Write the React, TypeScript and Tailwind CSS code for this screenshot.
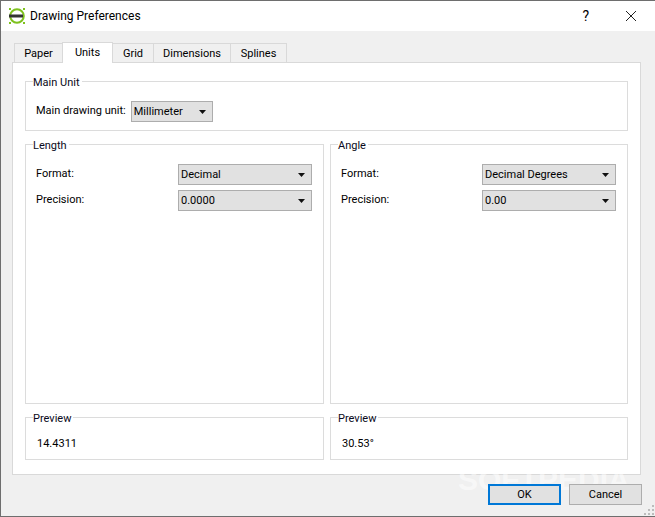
import { ReactNode } from 'react';

function Caret() {
  return (
    <svg width="7" height="4" viewBox="0 0 7 4" className="shrink-0">
      <path d="M0 0h7L3.5 4z" fill="#111" />
    </svg>
  );
}

function Combo({ value, className }: { value: string; className: string }) {
  return (
    <div className={`flex h-[21px] items-center justify-between border border-[#adadad] bg-[#e1e1e1] pl-[2px] pr-[6px] ${className}`}>
      <span className="pt-[2px]">{value}</span>
      <Caret />
    </div>
  );
}

function Group({ title, className, children }: { title: string; className: string; children: ReactNode }) {
  return (
    <fieldset className={`min-w-0 border border-[#dcdcdc] pl-[10px] pr-[11px] ${className}`}>
      <legend className="ml-[-3px] h-[16px] pr-[2px] leading-[20px] text-[#0a0a20]">{title}</legend>
      {children}
    </fieldset>
  );
}

function Row({ label, value, className }: { label: string; value: string; className?: string }) {
  return (
    <div className={`flex items-center justify-between ${className ?? ''}`}>
      <span>{label}</span>
      <Combo value={value} className="w-[134px]" />
    </div>
  );
}

function Logo() {
  return (
    <svg width="18" height="18" viewBox="0 0 18 18" className="shrink-0">
      <circle cx="9" cy="9" r="6.8" fill="none" stroke="#7ec11f" strokeWidth="2" />
      <path d="M1 1h2v2H1zM15 1h2v2h-2zM1 15h2v2H1zM15 15h2v2h-2z" fill="#7ec11f" />
      <rect x="1" y="7.5" width="14" height="3" fill="#333" />
    </svg>
  );
}

const tabs = ['Paper', 'Units', 'Grid', 'Dimensions', 'Splines'];
const tabWidths = ['w-[49px]', 'w-[51px]', 'w-[42px]', 'w-[78px]', 'w-[57px]'];

export default function App() {
  return (
    <div
      className="relative flex h-[517px] w-[655px] flex-col overflow-hidden border border-r-0 border-[#6e6e6e] bg-[#f0f0f0] text-[11px] text-black"
      style={{ fontFamily: 'Roboto, sans-serif' }}
    >
      {/* title bar */}
      <div className="flex h-[30px] shrink-0 items-center bg-white pl-[7px] text-[12px]">
        <Logo />
        <span className="ml-[4px]">Drawing Preferences</span>
        <span className="ml-auto mr-[36px] text-[14px]">?</span>
        <svg width="12" height="12" viewBox="0 0 12 12" className="mr-[18px]">
          <path d="M1 1l10 10M11 1L1 11" stroke="#222" strokeWidth="1" fill="none" />
        </svg>
      </div>

      <div className="flex flex-1 flex-col pl-[11px] pt-[10px]">
        {/* tabs */}
        <div className="z-10 flex h-[21px] items-end pl-[2px]">
          {tabs.map((t, i) => (
            <div
              key={t}
              className={
                t === 'Units'
                  ? `-mb-px -ml-px flex h-[21px] items-center justify-center border border-b-0 border-[#d9d9d9] bg-white pt-[1px] ${tabWidths[i]}`
                  : `-ml-px flex h-[19px] items-center justify-center border border-b-0 border-[#d9d9d9] bg-[#f0f0f0] pt-[2px] first:ml-0 ${tabWidths[i]}`
              }
            >
              {t}
            </div>
          ))}
        </div>

        {/* tab pane */}
        <div className="flex h-[413px] w-[629px] flex-col border border-[#d9d9d9] bg-white pl-[12px] pr-[12px] pt-[10px]">
          <Group title="Main Unit" className="h-[58px]">
            <div className="mt-[12px] flex items-center">
              <span>Main drawing unit:</span>
              <Combo value="Millimeter" className="ml-[5px] w-[82px]" />
            </div>
          </Group>

          <div className="mt-[5px] flex gap-[6px]">
            <Group title="Length" className="h-[268px] w-[299px]">
              <Row label="Format:" value="Decimal" className="mt-[12px]" />
              <Row label="Precision:" value="0.0000" className="mt-[5px]" />
            </Group>
            <Group title="Angle" className="h-[268px] w-[298px]">
              <Row label="Format:" value="Decimal Degrees" className="mt-[12px]" />
              <Row label="Precision:" value="0.00" className="mt-[5px]" />
            </Group>
          </div>

          <div className="mt-[5px] flex gap-[6px]">
            <Group title="Preview" className="h-[51px] w-[299px]">
              <div className="mt-[11px] pl-[1px]">14.4311</div>
            </Group>
            <Group title="Preview" className="h-[51px] w-[298px]">
              <div className="mt-[11px] pl-[1px]">30.53°</div>
            </Group>
          </div>
        </div>

        {/* buttons */}
        <div className="z-10 mt-[9px] flex pl-[476px]">
          <button className="h-[21px] w-[73px] border-2 border-[#0078d7] bg-[#e1e1e1] leading-none">OK</button>
          <button className="ml-[8px] h-[21px] w-[73px] border border-[#adadad] bg-[#e1e1e1] leading-none">Cancel</button>
        </div>
      </div>

      {/* watermark */}
      <div
        className="pointer-events-none absolute left-[457px] top-[464px] text-[30px] font-bold leading-none text-white/50"
        style={{ fontFamily: '"Liberation Sans", sans-serif' }}
      >
        SOFTPEDIA
      </div>

      {/* size grip */}
      <svg width="12" height="12" viewBox="0 0 12 12" className="absolute bottom-0 right-0">
        <path d="M9 1h2v2H9zM5 5h2v2H5zM9 5h2v2H9zM1 9h2v2H1zM5 9h2v2H5zM9 9h2v2H9z" fill="#bcbcbc" />
      </svg>
    </div>
  );
}
